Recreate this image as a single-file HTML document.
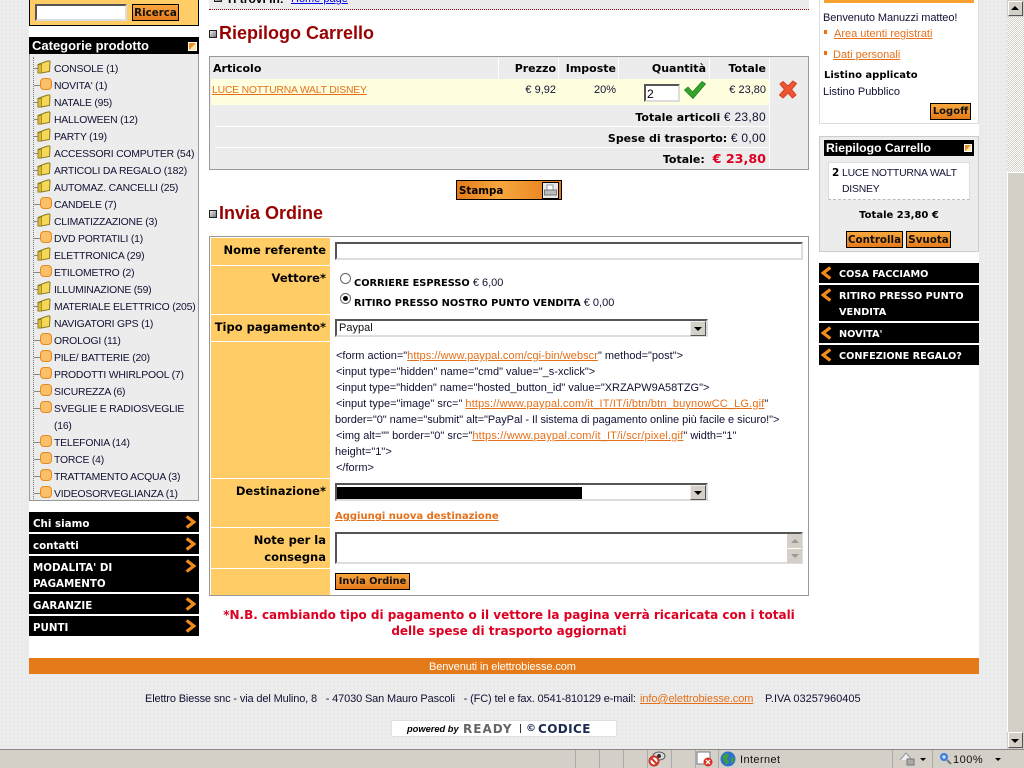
<!DOCTYPE html>
<html lang="it"><head><meta charset="utf-8"><title>Riepilogo Carrello</title>
<style>
html,body{margin:0;padding:0;width:1024px;height:768px;overflow:hidden}
body{position:relative;background-color:#ececec;background-image:radial-gradient(#dcdcdc .6px,transparent .8px);background-size:4px 4px;font:11px/16px "Liberation Sans",sans-serif;color:#111133}
div,span,a,svg{position:absolute}
.t{white-space:nowrap;height:16px;line-height:16px;margin-top:1px}
.c{font-size:10.4px;letter-spacing:-.2px;margin-top:2px}
.r{text-align:right}
.b{font-family:"DejaVu Sans",sans-serif;font-weight:bold;color:#000}
a{color:#e5701a;text-decoration:underline}
.k{background:#000}
.w{color:#fff;font-weight:bold;font-family:"DejaVu Sans",sans-serif;font-size:10.3px;white-space:nowrap;line-height:16px;height:16px;margin-top:1px}
.w2{font-size:9.7px}
.btn{box-sizing:border-box;border:1px solid #000;background:linear-gradient(#f8a83e,#e57a1a);font:bold 10.3px/16px "DejaVu Sans",sans-serif;color:#111;text-align:center;white-space:nowrap}
.y{background:#ffcc66}
.inp{box-sizing:border-box;background:#fff;border:2px solid;border-color:#555 #ddd #ddd #555}
.h{font:bold 18px/24px "Liberation Sans",sans-serif;color:#990000;white-space:nowrap}
.sq{box-sizing:border-box;width:8px;height:8px;border:1px solid #222;background:linear-gradient(135deg,#eee,#777)}
.sel{position:absolute;background:#d4d0c8;border:1px solid;border-color:#eee #555 #555 #eee;box-sizing:border-box;width:16px;height:15px}
.sel:after{content:"";position:absolute;left:3px;top:5px;border:4px solid transparent;border-top:4px solid #000;border-bottom:0}
.l11{font-size:11px}
.l115{font-size:11.5px}
.s{position:static}
</style></head><body>
<svg width="0" height="0" style="left:0;top:0"><defs>
<symbol id="f" viewBox="0 0 14 14"><path d="M1 4.5 9 1.5 12 .8 13 1.5 12.5 11.5 4 13 1 13Z" fill="#f5d858" stroke="#8a7a20"/><path d="M1 5 4.5 4 4.5 13 1 13Z" fill="#e0b838" stroke="#8a7a20" stroke-width=".7"/></symbol>
<symbol id="o" viewBox="0 0 12 12"><rect x=".5" y=".5" width="11" height="11" rx="3.5" fill="#fbbf6a" stroke="#e58a1a"/></symbol>
<symbol id="ar" viewBox="0 0 10 12"><path d="M1.5 1 8 6 1.5 11" fill="none" stroke="#f08a1c" stroke-width="3"/></symbol>
<symbol id="al" viewBox="0 0 10 12"><path d="M8.5 1 2 6 8.5 11" fill="none" stroke="#f08a1c" stroke-width="3"/></symbol>
</defs></svg>

<!-- main white -->
<div style="left:29px;top:0;width:950px;height:658px;background:#fff"></div>

<!-- search -->
<div class="y" style="left:29px;top:0;width:168px;height:25px;border:1px solid #000;border-top:0"></div>
<div class="inp" style="left:35px;top:4px;width:92px;height:17px"></div>
<div class="btn" style="left:132px;top:4px;width:47px;height:17px">Ricerca</div>

<!-- categories -->
<div style="left:29px;top:37px;width:168px;height:462px;background:#ececec;border:1px solid #999"></div>
<div style="left:29px;top:37px;width:170px;height:17px;background:#000"></div>
<div class="t" style="left:32px;top:37px;color:#fff;font:bold 13px/16px 'Liberation Sans',sans-serif">Categorie prodotto</div>
<div style="left:188px;top:42px;width:7px;height:7px;background:linear-gradient(135deg,#f09020 50%,#ffe8b0 50%);border:1px solid #fff"></div>
<div style="left:33px;top:57px;height:442px;border-left:1px dotted #777"></div>
<div style="left:34px;top:60px;width:6px;height:440px;background:repeating-linear-gradient(transparent 0 8px,#888 8px 9px,transparent 9px 17px)"></div>
<div style="left:34px;top:423px;width:6px;height:5px;background:#ececec"></div>

<svg style="left:37px;top:60px" width="14" height="14"><use href="#f"/></svg><div class="t c" style="left:54px;top:60px">CONSOLE (1)</div>
<svg style="left:40px;top:78px" width="12" height="12"><use href="#o"/></svg><div class="t c" style="left:54px;top:77px">NOVITA' (1)</div>
<svg style="left:37px;top:94px" width="14" height="14"><use href="#f"/></svg><div class="t c" style="left:54px;top:94px">NATALE (95)</div>
<svg style="left:37px;top:111px" width="14" height="14"><use href="#f"/></svg><div class="t c" style="left:54px;top:111px">HALLOWEEN (12)</div>
<svg style="left:37px;top:128px" width="14" height="14"><use href="#f"/></svg><div class="t c" style="left:54px;top:128px">PARTY (19)</div>
<svg style="left:37px;top:145px" width="14" height="14"><use href="#f"/></svg><div class="t c" style="left:54px;top:145px">ACCESSORI COMPUTER (54)</div>
<svg style="left:37px;top:162px" width="14" height="14"><use href="#f"/></svg><div class="t c" style="left:54px;top:162px">ARTICOLI DA REGALO (182)</div>
<svg style="left:37px;top:179px" width="14" height="14"><use href="#f"/></svg><div class="t c" style="left:54px;top:179px">AUTOMAZ. CANCELLI (25)</div>
<svg style="left:40px;top:197px" width="12" height="12"><use href="#o"/></svg><div class="t c" style="left:54px;top:196px">CANDELE (7)</div>
<svg style="left:37px;top:213px" width="14" height="14"><use href="#f"/></svg><div class="t c" style="left:54px;top:213px">CLIMATIZZAZIONE (3)</div>
<svg style="left:40px;top:231px" width="12" height="12"><use href="#o"/></svg><div class="t c" style="left:54px;top:230px">DVD PORTATILI (1)</div>
<svg style="left:37px;top:247px" width="14" height="14"><use href="#f"/></svg><div class="t c" style="left:54px;top:247px">ELETTRONICA (29)</div>
<svg style="left:40px;top:265px" width="12" height="12"><use href="#o"/></svg><div class="t c" style="left:54px;top:264px">ETILOMETRO (2)</div>
<svg style="left:37px;top:281px" width="14" height="14"><use href="#f"/></svg><div class="t c" style="left:54px;top:281px">ILLUMINAZIONE (59)</div>
<svg style="left:37px;top:298px" width="14" height="14"><use href="#f"/></svg><div class="t c" style="left:54px;top:298px">MATERIALE ELETTRICO (205)</div>
<svg style="left:37px;top:315px" width="14" height="14"><use href="#f"/></svg><div class="t c" style="left:54px;top:315px">NAVIGATORI GPS (1)</div>
<svg style="left:40px;top:333px" width="12" height="12"><use href="#o"/></svg><div class="t c" style="left:54px;top:332px">OROLOGI (11)</div>
<svg style="left:40px;top:350px" width="12" height="12"><use href="#o"/></svg><div class="t c" style="left:54px;top:349px">PILE/ BATTERIE (20)</div>
<svg style="left:40px;top:367px" width="12" height="12"><use href="#o"/></svg><div class="t c" style="left:54px;top:366px">PRODOTTI WHIRLPOOL (7)</div>
<svg style="left:40px;top:384px" width="12" height="12"><use href="#o"/></svg><div class="t c" style="left:54px;top:383px">SICUREZZA (6)</div>
<svg style="left:40px;top:401px" width="12" height="12"><use href="#o"/></svg><div class="t c" style="left:54px;top:400px">SVEGLIE E RADIOSVEGLIE</div>
<div class="t c" style="left:54px;top:417px">(16)</div>
<svg style="left:40px;top:435px" width="12" height="12"><use href="#o"/></svg><div class="t c" style="left:54px;top:434px">TELEFONIA (14)</div>
<svg style="left:40px;top:452px" width="12" height="12"><use href="#o"/></svg><div class="t c" style="left:54px;top:451px">TORCE (4)</div>
<svg style="left:40px;top:469px" width="12" height="12"><use href="#o"/></svg><div class="t c" style="left:54px;top:468px">TRATTAMENTO ACQUA (3)</div>
<svg style="left:40px;top:486px" width="12" height="12"><use href="#o"/></svg><div class="t c" style="left:54px;top:485px">VIDEOSORVEGLIANZA (1)</div>

<!-- left menu -->
<div class="k" style="left:29px;top:512px;width:170px;height:20px"></div><div class="w" style="left:33px;top:515px">Chi siamo</div><svg style="left:185px;top:515px" width="11" height="14"><use href="#ar"/></svg>
<div class="k" style="left:29px;top:534px;width:170px;height:20px"></div><div class="w" style="left:33px;top:537px">contatti</div><svg style="left:185px;top:537px" width="11" height="14"><use href="#ar"/></svg>
<div class="k" style="left:29px;top:556px;width:170px;height:36px"></div><div class="w" style="left:33px;top:559px">MODALITA' DI</div><div class="w" style="left:33px;top:575px">PAGAMENTO</div><svg style="left:185px;top:559px" width="11" height="14"><use href="#ar"/></svg>
<div class="k" style="left:29px;top:594px;width:170px;height:20px"></div><div class="w" style="left:33px;top:597px">GARANZIE</div><svg style="left:185px;top:597px" width="11" height="14"><use href="#ar"/></svg>
<div class="k" style="left:29px;top:616px;width:170px;height:20px"></div><div class="w" style="left:33px;top:619px">PUNTI</div><svg style="left:185px;top:619px" width="11" height="14"><use href="#ar"/></svg>

<!-- breadcrumb -->
<div style="left:209px;top:0;width:600px;height:9px;background:#ececec;border-bottom:1px dotted #990000;overflow:hidden">
<div class="sq" style="left:5px;top:-6px"></div>
<div class="t" style="left:17px;top:-10px;font:bold 12px/16px 'Liberation Sans',sans-serif;color:#000">Ti trovi in:</div>
<a href="#" style="left:82px;top:-9px;color:#0000ee;line-height:16px;white-space:nowrap">Home page</a></div>

<!-- cart -->
<div class="sq" style="left:209px;top:30px"></div>
<div class="h" style="left:219px;top:21px">Riepilogo Carrello</div>
<div style="left:209px;top:56px;width:598px;height:112px;border:1px solid #999;background:#ececec"></div>
<div style="left:211px;top:79px;width:558px;height:26px;background:#ffffe0"></div>
<div style="left:215px;top:126px;width:554px;height:1px;background:#fff"></div>
<div style="left:215px;top:147px;width:554px;height:1px;background:#fff"></div>
<div style="left:498px;top:58px;width:1px;height:21px;background:#fff"></div>
<div style="left:558px;top:58px;width:1px;height:21px;background:#fff"></div>
<div style="left:618px;top:58px;width:1px;height:21px;background:#fff"></div>
<div style="left:709px;top:58px;width:1px;height:21px;background:#fff"></div>
<div style="left:769px;top:58px;width:1px;height:110px;background:#fff"></div>
<div class="t b l11" style="left:213px;top:60px">Articolo</div>
<div class="t b r l11" style="right:468px;top:60px">Prezzo</div>
<div class="t b r l11" style="right:408px;top:60px">Imposte</div>
<div class="t b r l11" style="right:318px;top:60px">Quantità</div>
<div class="t b r l11" style="right:258px;top:60px">Totale</div>
<a class="t c" href="#" style="left:212px;top:81px">LUCE NOTTURNA WALT DISNEY</a>
<div class="t r" style="right:468px;top:81px">€ 9,92</div>
<div class="t r" style="right:408px;top:81px">20%</div>
<div class="inp" style="left:644px;top:84px;width:36px;height:18px;padding:1px 0 0 1px;font-size:12px;line-height:14px;color:#000">2</div>
<svg style="left:683px;top:80px" width="24" height="20" viewBox="0 0 24 20"><path d="M1.5 10 5 7 9.5 12 19 1.5 22.5 4 10 18.5Z" fill="#35a52a" stroke="#1f7f1a" stroke-width=".8"/></svg>
<div class="t r" style="right:258px;top:81px">€ 23,80</div>
<svg style="left:778px;top:80px" width="20" height="19" viewBox="0 0 20 19"><path d="M2 4 5 1.5 10 6 15 1 18.5 3.5 13.5 9.5 18 15 14.5 18 10 13 5 18 1.5 15 6.5 9.5Z" fill="#ee5533" stroke="#d84020" stroke-linejoin="round"/></svg>
<div class="t r" style="right:258px;top:108px;font-size:12px;letter-spacing:.3px"><b style="font-family:'DejaVu Sans',sans-serif;font-size:11px;color:#000;letter-spacing:0">Totale articoli</b> € 23,80</div>
<div class="t r" style="right:258px;top:129px;font-size:12px;letter-spacing:.3px"><b style="font-family:'DejaVu Sans',sans-serif;font-size:11px;color:#000;letter-spacing:0">Spese di trasporto:</b> € 0,00</div>
<div class="t b r" style="right:258px;top:150px;font-size:11px">Totale: <span class="s" style="color:#dd0022;font-size:12.7px;margin-left:4px">€ 23,80</span></div>

<!-- stampa -->
<div style="left:456px;top:180px;width:106px;height:20px;box-sizing:border-box;border:1px solid #000;background:linear-gradient(90deg,#e57a1a,#f8a83e 40%,#e57a1a);"></div>
<div class="t b" style="left:459px;top:182px;font-size:10.3px">Stampa</div>
<svg style="left:542px;top:182px" width="17" height="17" viewBox="0 0 17 17"><rect x=".5" y=".5" width="16" height="16" fill="#e8e8e8" stroke="#000"/><path d="M5 3H11V8H5Z" fill="#fff" stroke="#999"/><path d="M2.5 8H14.5V13H2.5Z" fill="#bbb" stroke="#777"/></svg>

<!-- invia -->
<div class="sq" style="left:209px;top:210px"></div>
<div class="h" style="left:219px;top:201px">Invia Ordine</div>
<div style="left:209px;top:236px;width:598px;height:358px;border:1px solid #999;background:#fff"></div>
<div class="y" style="left:211px;top:238px;width:119px;height:27px"></div>
<div class="y" style="left:211px;top:266px;width:119px;height:48px"></div>
<div class="y" style="left:211px;top:315px;width:119px;height:26px"></div>
<div class="y" style="left:211px;top:342px;width:119px;height:136px"></div>
<div class="y" style="left:211px;top:479px;width:119px;height:48px"></div>
<div class="y" style="left:211px;top:528px;width:119px;height:40px"></div>
<div class="y" style="left:211px;top:569px;width:119px;height:26px"></div>
<div class="t b r l115" style="right:698px;top:241px">Nome referente</div>
<div class="t b r l115" style="right:698px;top:269px">Vettore*</div>
<div class="t b r l115" style="right:698px;top:318px">Tipo pagamento*</div>
<div class="t b r l115" style="right:698px;top:482px">Destinazione*</div>
<div class="t b r l115" style="right:698px;top:531px">Note per la</div>
<div class="t b r l115" style="right:698px;top:548px">consegna</div>

<div class="inp" style="left:335px;top:242px;width:468px;height:18px"></div>
<div style="left:340px;top:273px;width:9px;height:9px;border-radius:50%;border:1px solid #666;background:#fff"></div>
<div style="left:340px;top:293px;width:9px;height:9px;border-radius:50%;border:1px solid #666;background:#fff"></div>
<div style="left:343px;top:296px;width:5px;height:5px;border-radius:50%;background:#000"></div>
<div class="t" style="left:354px;top:274px"><b style="font-family:'DejaVu Sans',sans-serif;font-size:9.8px;color:#000">CORRIERE ESPRESSO</b> € 6,00</div>
<div class="t" style="left:354px;top:294px"><b style="font-family:'DejaVu Sans',sans-serif;font-size:9.8px;color:#000">RITIRO PRESSO NOSTRO PUNTO VENDITA</b> € 0,00</div>
<div class="inp" style="left:335px;top:319px;width:373px;height:18px;padding-left:2px;font-size:11px;line-height:14px;color:#111">Paypal<span class="sel" style="right:0;top:0"></span></div>
<div class="t" style="left:336px;top:347px">&lt;form action="<a class="s" href="#" style="letter-spacing:.05px">https://www.paypal.com/cgi-bin/webscr</a>" method="post"&gt;</div>
<div class="t" style="left:336px;top:363px">&lt;input type="hidden" name="cmd" value="_s-xclick"&gt;</div>
<div class="t" style="left:336px;top:379px;letter-spacing:-.03px">&lt;input type="hidden" name="hosted_button_id" value="XRZAPW9A58TZG"&gt;</div>
<div class="t" style="left:336px;top:395px">&lt;input type="image" src=" <a class="s" href="#" style="letter-spacing:.15px">https://www.paypal.com/it_IT/IT/i/btn/btn_buynowCC_LG.gif</a>"</div>
<div class="t" style="left:335px;top:411px;letter-spacing:-.05px">border="0" name="submit" alt="PayPal - Il sistema di pagamento online più facile e sicuro!"&gt;</div>
<div class="t" style="left:336px;top:427px">&lt;img alt="" border="0" src="<a class="s" href="#" style="letter-spacing:.17px">https://www.paypal.com/it_IT/i/scr/pixel.gif</a>" width="1"</div>
<div class="t" style="left:335px;top:443px">height="1"&gt;</div>
<div class="t" style="left:336px;top:459px">&lt;/form&gt;</div>
<div class="inp" style="left:335px;top:483px;width:373px;height:18px"><span class="sel" style="right:0;top:0"></span></div>
<div style="left:337px;top:487px;width:245px;height:12px;background:#000"></div>
<a class="t" href="#" style="left:335px;top:508px;font:bold 10px/16px 'DejaVu Sans',sans-serif">Aggiungi nuova destinazione</a>
<div class="inp" style="left:335px;top:532px;width:468px;height:32px"></div>
<div style="left:787px;top:534px;width:15px;height:14px;background:#d4d0c8"></div>
<div style="left:787px;top:549px;width:15px;height:14px;background:#d4d0c8"></div>
<div style="left:791px;top:539px;border:4px solid transparent;border-bottom:4px solid #999;border-top:0"></div>
<div style="left:791px;top:554px;border:4px solid transparent;border-top:4px solid #999;border-bottom:0"></div>
<div class="btn" style="left:335px;top:573px;width:75px;height:17px;font-size:9.8px">Invia Ordine</div>
<div class="t" style="left:209px;width:600px;top:606px;text-align:center;color:#dd0022;font:bold 12px/16px 'DejaVu Sans',sans-serif">*N.B. cambiando tipo di pagamento o il vettore la pagina verrà ricaricata con i totali</div>
<div class="t" style="left:209px;width:600px;top:622px;text-align:center;color:#dd0022;font:bold 12px/16px 'DejaVu Sans',sans-serif">delle spese di trasporto aggiornati</div>

<!-- right column -->
<div style="left:819px;top:0;width:158px;height:123px;background:#fff;border:1px solid #ddd;border-top:0"></div>
<div style="left:824px;top:0;width:150px;height:3px;background:#f8a030"></div>
<div class="t" style="left:823px;top:9px;letter-spacing:-.08px">Benvenuto Manuzzi matteo!</div>
<div style="left:824px;top:30px;width:3px;height:4px;background:#f07010"></div>
<a class="t" href="#" style="left:834px;top:25px">Area utenti registrati</a>
<div style="left:824px;top:51px;width:3px;height:4px;background:#f07010"></div>
<a class="t" href="#" style="left:833px;top:46px">Dati personali</a>
<div class="t b" style="left:824px;top:67px;font-size:10px">Listino applicato</div>
<div class="t" style="left:823px;top:83px">Listino Pubblico</div>
<div class="btn" style="left:930px;top:103px;width:41px;height:17px;font-size:10px">Logoff</div>

<div style="left:819px;top:136px;width:158px;height:114px;background:#ececec;border:1px solid #ccc"></div>
<div class="k" style="left:824px;top:140px;width:150px;height:16px"></div>
<div class="t" style="left:826px;top:139px;color:#fff;font:bold 12.2px/16px 'Liberation Sans',sans-serif">Riepilogo Carrello</div>
<div style="left:964px;top:144px;width:6px;height:6px;background:linear-gradient(135deg,#f09020 50%,#ffe8b0 50%);border:1px solid #fff"></div>
<div style="left:828px;top:162px;width:140px;height:36px;background:#fff;border:1px solid #ddd;border-bottom:1px dashed #bbb"></div>
<div class="t b" style="left:832px;top:164px;font-size:10.5px">2</div>
<div class="t c" style="left:842px;top:164px">LUCE NOTTURNA WALT</div>
<div class="t c" style="left:842px;top:180px">DISNEY</div>
<div class="t b" style="left:819px;width:160px;top:207px;text-align:center;font-size:10px">Totale 23,80 €</div>
<div class="btn" style="left:846px;top:231px;width:57px;height:17px">Controlla</div>
<div class="btn" style="left:906px;top:231px;width:45px;height:17px">Svuota</div>

<div class="k" style="left:819px;top:263px;width:160px;height:20px"></div><svg style="left:821px;top:266px" width="11" height="14"><use href="#al"/></svg><div class="w w2" style="left:839px;top:266px">COSA FACCIAMO</div>
<div class="k" style="left:819px;top:285px;width:160px;height:36px"></div><svg style="left:821px;top:288px" width="11" height="14"><use href="#al"/></svg><div class="w w2" style="left:839px;top:288px">RITIRO PRESSO PUNTO</div><div class="w w2" style="left:839px;top:304px">VENDITA</div>
<div class="k" style="left:819px;top:323px;width:160px;height:20px"></div><svg style="left:821px;top:326px" width="11" height="14"><use href="#al"/></svg><div class="w w2" style="left:839px;top:326px">NOVITA'</div>
<div class="k" style="left:819px;top:345px;width:160px;height:20px"></div><svg style="left:821px;top:348px" width="11" height="14"><use href="#al"/></svg><div class="w w2" style="left:839px;top:348px">CONFEZIONE REGALO?</div>

<!-- footer -->
<div style="left:29px;top:658px;width:950px;height:16px;background:#e57a1a"></div>
<div class="t" style="left:429px;top:658px;color:#fff;letter-spacing:-.1px">Benvenuti in elettrobiesse.com</div>
<div class="t" style="left:145px;top:690px;letter-spacing:-.14px">Elettro Biesse snc - via del Mulino, 8 &nbsp; - 47030 San Mauro Pascoli &nbsp; - (FC) tel e fax. 0541-810129 e-mail:</div>
<a class="t" href="#" style="left:640px;top:690px;letter-spacing:-.08px">info@elettrobiesse.com</a>
<div class="t" style="left:765px;top:690px">P.IVA 03257960405</div>
<div style="left:391px;top:720px;width:226px;height:17px;background:#fff;border:1px solid #e0e0e0;box-sizing:border-box"></div>
<div class="t" style="left:407px;top:720px;font:italic bold 9.3px/16px 'Liberation Sans',sans-serif;color:#000">powered by</div>
<div class="t" style="left:463px;top:720px;font:bold 12px/16px 'DejaVu Sans',sans-serif;color:#666;letter-spacing:1px">READY</div>
<div style="left:520px;top:724px;width:1px;height:9px;background:#333"></div>
<div class="t" style="left:526px;top:720px;font:bold 10px/16px 'DejaVu Sans',sans-serif;color:#1a2a50">©</div>
<div class="t" style="left:538px;top:720px;font:bold 12px/16px 'DejaVu Sans',sans-serif;color:#1a2a50;letter-spacing:.4px">CODICE</div>

<!-- scrollbar -->
<div style="left:1007px;top:0;width:17px;height:749px;background:#d4d0c8"></div>
<div style="left:1007px;top:17px;width:17px;height:155px;background-color:#fff;background-image:repeating-conic-gradient(#d4d0c8 0 25%,#fff 0 50%);background-size:2px 2px"></div>
<div style="left:1008px;top:1px;width:15px;height:15px;background:#d4d0c8;border:1px solid #fff;box-sizing:border-box;border-right-color:#555;border-bottom-color:#555"></div>
<div style="left:1011px;top:6px;border:4px solid transparent;border-bottom:4px solid #000;border-top:0"></div>
<div style="left:1007px;top:172px;width:17px;height:560px;background:#d4d0c8;border-top:1px solid #fff;border-left:1px solid #fff;box-sizing:border-box"></div>
<div style="left:1008px;top:732px;width:15px;height:16px;background:#d4d0c8;border:1px solid #fff;box-sizing:border-box;border-right-color:#555;border-bottom-color:#555"></div>
<div style="left:1011px;top:739px;border:4px solid transparent;border-top:4px solid #000;border-bottom:0"></div>

<!-- status bar -->
<div style="left:0;top:749px;width:1024px;height:19px;background:#d4d0c8;border-top:1px solid #888;box-sizing:border-box"></div>
<div style="left:575px;top:750px;width:1px;height:18px;background:#aaa"></div>
<div style="left:599px;top:750px;width:1px;height:18px;background:#aaa"></div>
<div style="left:623px;top:750px;width:1px;height:18px;background:#aaa"></div>
<div style="left:647px;top:750px;width:1px;height:18px;background:#aaa"></div>
<svg style="left:648px;top:750px" width="18" height="17" viewBox="0 0 18 17"><ellipse cx="11" cy="6" rx="6" ry="4" fill="#ddd" stroke="#555"/><circle cx="11" cy="6" r="2" fill="#333"/><circle cx="6" cy="11" r="4.5" fill="#fff" stroke="#cc3322" stroke-width="2"/><path d="M3 8 9 14" stroke="#cc3322" stroke-width="2"/></svg>
<div style="left:671px;top:750px;width:1px;height:18px;background:#aaa"></div>
<div style="left:695px;top:750px;width:1px;height:18px;background:#aaa"></div>
<svg style="left:696px;top:751px" width="18" height="16" viewBox="0 0 18 16"><rect x="1" y="1" width="13" height="12" fill="#fff" stroke="#778"/><circle cx="12" cy="11" r="4.5" fill="#d83020"/><path d="M10 9 14 13M14 9 10 13" stroke="#fff" stroke-width="1.3"/></svg>
<div style="left:718px;top:750px;width:1px;height:18px;background:#aaa"></div>
<svg style="left:720px;top:751px" width="16" height="16" viewBox="0 0 16 16"><circle cx="8" cy="8" r="7.5" fill="#2f6fcf"/><path d="M2 6 6 2 9 4 7 8 9 11 6 14 4 10ZM11 6 14 7 14 11 11 12Z" fill="#3aa03a"/></svg>
<div class="t" style="left:740px;top:751px;color:#111;letter-spacing:.4px">Internet</div>
<div style="left:892px;top:750px;width:1px;height:18px;background:#aaa"></div>
<svg style="left:898px;top:751px" width="18" height="16" viewBox="0 0 18 16"><path d="M2 9 8 2 14 9" fill="#eee" stroke="#999"/><rect x="9" y="8" width="7" height="6" fill="#aaa" stroke="#777"/></svg>
<div style="left:920px;top:758px;border:3px solid transparent;border-top:3px solid #000;border-bottom:0"></div>
<div style="left:932px;top:750px;width:1px;height:18px;background:#aaa"></div>
<svg style="left:938px;top:751px" width="14" height="15" viewBox="0 0 14 15"><circle cx="6" cy="6" r="4.5" fill="#3a80d8" stroke="#ccd"/><path d="M9 9 13 13" stroke="#777" stroke-width="2"/><path d="M4 6H8M6 4V8" stroke="#fff"/></svg>
<div class="t" style="left:953px;top:751px;color:#111;letter-spacing:.5px">100%</div>
<div style="left:995px;top:758px;border:3px solid transparent;border-top:3px solid #000;border-bottom:0"></div>
</body></html>
